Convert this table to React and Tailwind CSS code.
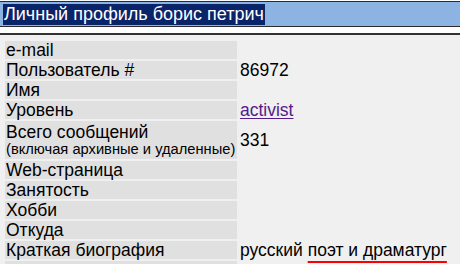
const rows = [
  { label: 'e-mail', value: '' },
  { label: 'Пользователь #', value: '86972' },
  { label: 'Имя', value: '' },
  { label: 'Уровень', value: 'activist', link: true },
  { label: 'Всего сообщений', note: '(включая архивные и удаленные)', value: '331' },
  { label: 'Web-страница', value: '' },
  { label: 'Занятость', value: '' },
  { label: 'Хобби', value: '' },
  { label: 'Откуда', value: '' },
  { label: 'Краткая биография', value: 'bio' },
  { label: '', value: '' },
]

function Value({ row }) {
  if (row.link) {
    return <a href="#" className="text-[#551a8b] underline underline-offset-[2px]">{row.value}</a>
  }
  if (row.value === 'bio') {
    // spellchecker squiggle under the second half
    return (
      <span className="whitespace-nowrap">
        русский{' '}
        <span className="underline decoration-[#ff0000] decoration-2 underline-offset-[5px] [text-decoration-skip-ink:none]">поэт и драматург</span>
      </span>
    )
  }
  return <span>{row.value}</span>
}

export default function App() {
  return (
    <div className="w-[460px] h-[264px] overflow-hidden bg-[#f0f0f0] text-black font-['Liberation_Sans',Arial,sans-serif]">
      <div className="h-[1px] bg-white" />
      <div className="h-[26px] border-t border-b border-[#2b2b2b] bg-[#8db3e2] flex items-center pl-[3px]">
        <span className="bg-[#0a246a] text-white text-[18px] leading-[21px] px-[1px]">Личный профиль борис петрич</span>
      </div>
      <div className="h-[6px] bg-white" />
      <div className="h-[2px] bg-[#333333]" />
      <div className="flex flex-col gap-[2px] pt-[6px] pl-[5px] text-[17.5px]">
        {rows.map((row, i) => (
          <div key={i} className="flex gap-[3px]">
            <div className={`w-[232px] shrink-0 bg-[#e0e0e0] flex flex-col justify-center pl-[1px] ${row.note ? 'h-[38px]' : 'h-[18px]'}`}>
              <span className="leading-[18px] whitespace-nowrap">{row.label}</span>
              {row.note && <span className="text-[14.7px] leading-[16px] whitespace-nowrap">{row.note}</span>}
            </div>
            <div className="flex items-center leading-[18px]">
              <Value row={row} />
            </div>
          </div>
        ))}
      </div>
    </div>
  )
}
